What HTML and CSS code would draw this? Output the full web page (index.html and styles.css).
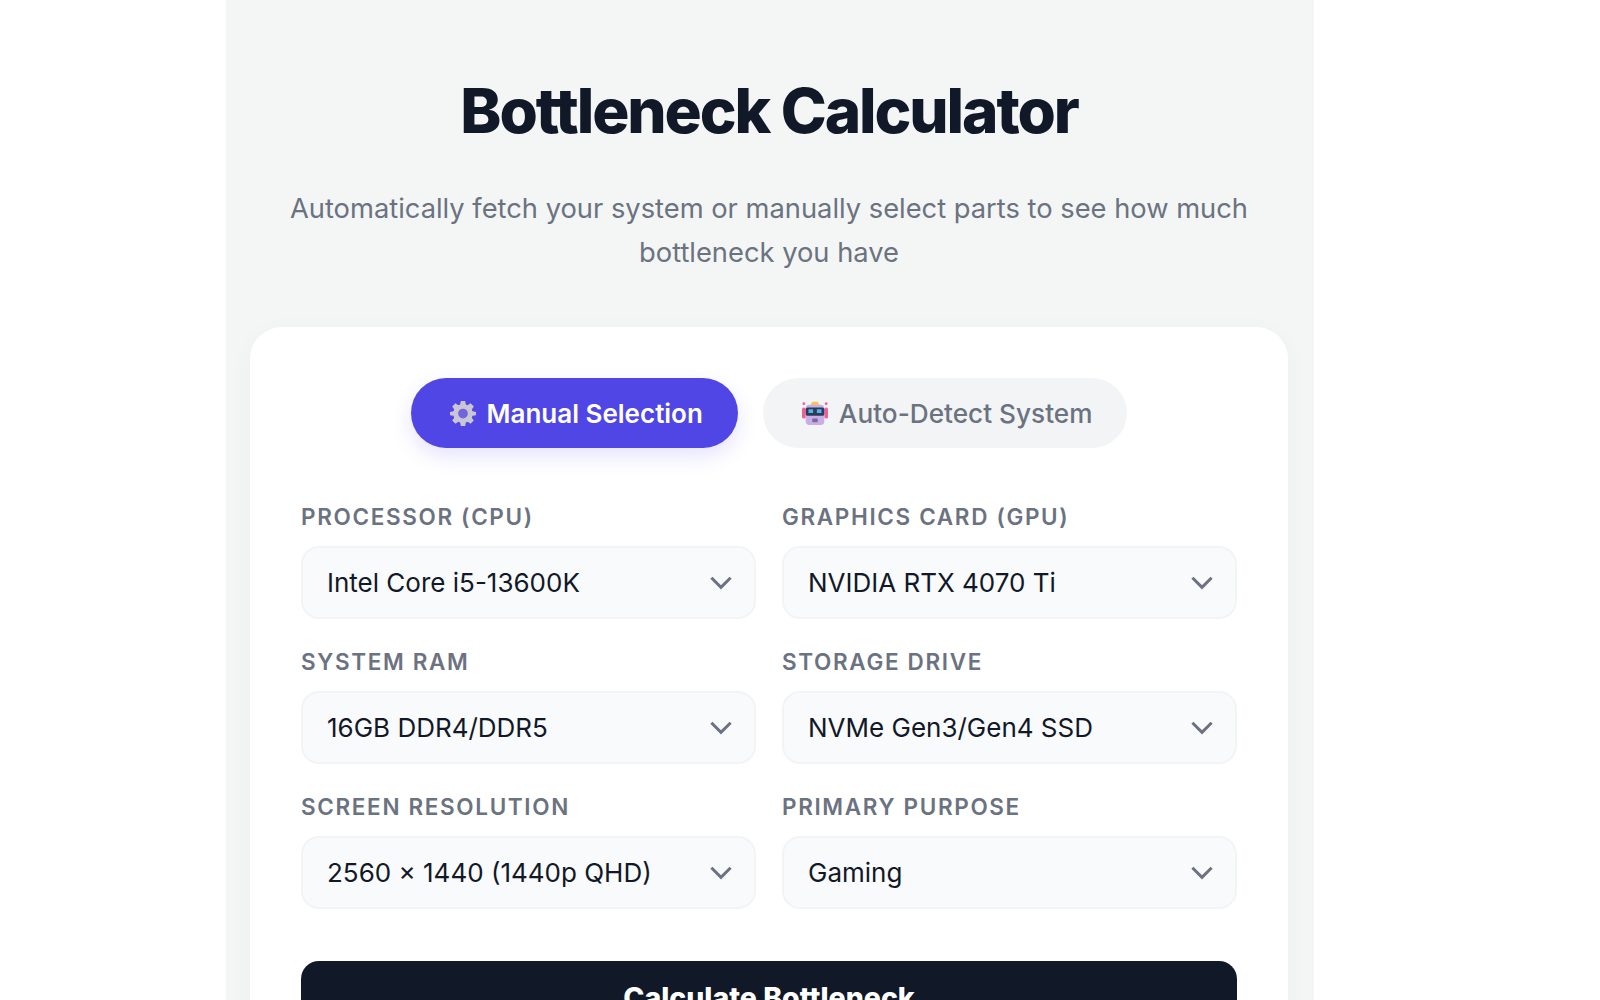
FILE: index.html
```html
<!DOCTYPE html>
<html lang="en">

<head>
    <meta charset="UTF-8">
    <meta name="viewport" content="width=device-width, initial-scale=1.0">
    <title>Bottleneck Calculator</title>
    <link rel="stylesheet" href="styles.css">
</head>

<body>
    <main class="panel">
        <h1>Bottleneck Calculator</h1>
        <p class="subtitle">Automatically fetch your system or manually select parts to see how much bottleneck you have</p>

        <section class="card">
            <div class="tabs">
                <button class="tab tab_active">
                    <svg class="tab_icon" viewBox="0 0 24 24">
                        <path fill="#c9c6d6" d="M10 1h4l.6 3.200 1.700.7L19 3l3 3-1.900 2.700.7 1.700L24 11v3l-3.200.6-.7 1.700L22 19l-3 3-2.700-1.900-1.700.7L14 24h-4l-.6-3.200-1.700-.7L5 22l-3-3 1.900-2.700-.7-1.700L0 14v-3l3.200-.6.7-1.700L2 6l3-3 2.700 1.900 1.700-.7z" />
                        <circle cx="12" cy="12.500" r="4.500" fill="#6f66de" />
                    </svg>
                    Manual Selection
                </button>
                <button class="tab">
                    <svg class="tab_icon" viewBox="0 0 28 28">
                        <rect x="0" y="8" width="4" height="12" rx="2" fill="#ef5f97" />
                        <rect x="24" y="8" width="4" height="12" rx="2" fill="#ef5f97" />
                        <circle cx="2" cy="4" r="1.500" fill="#ef5f97" />
                        <circle cx="26" cy="4" r="1.500" fill="#ef5f97" />
                        <path fill="#f5c451" d="M9 6l2-4h6l2 4z" />
                        <rect x="4" y="5" width="20" height="22" rx="4" fill="#c9aee6" />
                        <rect x="4" y="8" width="20" height="9" rx="2" fill="#2e3a57" />
                        <rect x="7" y="10" width="5" height="4" fill="#4fb4ec" />
                        <rect x="16" y="10" width="5" height="4" fill="#4fb4ec" />
                        <rect x="11" y="20" width="6" height="4" rx="1" fill="#7d6a9c" />
                    </svg>
                    Auto-Detect System
                </button>
            </div>

            <div class="fields">
                <div class="field">
                    <label for="cpu">Processor (CPU)</label>
                    <div class="select_wrap">
                        <select id="cpu"><option>Intel Core i5-13600K</option></select>
                        <svg class="chevron" viewBox="0 0 20 12"><path d="M2 2l8 8 8-8" /></svg>
                    </div>
                </div>
                <div class="field">
                    <label for="gpu">Graphics Card (GPU)</label>
                    <div class="select_wrap">
                        <select id="gpu"><option>NVIDIA RTX 4070 Ti</option></select>
                        <svg class="chevron" viewBox="0 0 20 12"><path d="M2 2l8 8 8-8" /></svg>
                    </div>
                </div>
                <div class="field">
                    <label for="ram">System RAM</label>
                    <div class="select_wrap">
                        <select id="ram"><option>16GB DDR4/DDR5</option></select>
                        <svg class="chevron" viewBox="0 0 20 12"><path d="M2 2l8 8 8-8" /></svg>
                    </div>
                </div>
                <div class="field">
                    <label for="storage">Storage Drive</label>
                    <div class="select_wrap">
                        <select id="storage"><option>NVMe Gen3/Gen4 SSD</option></select>
                        <svg class="chevron" viewBox="0 0 20 12"><path d="M2 2l8 8 8-8" /></svg>
                    </div>
                </div>
                <div class="field">
                    <label for="resolution">Screen Resolution</label>
                    <div class="select_wrap">
                        <select id="resolution"><option>2560 × 1440 (1440p QHD)</option></select>
                        <svg class="chevron" viewBox="0 0 20 12"><path d="M2 2l8 8 8-8" /></svg>
                    </div>
                </div>
                <div class="field">
                    <label for="purpose">Primary Purpose</label>
                    <div class="select_wrap">
                        <select id="purpose"><option>Gaming</option></select>
                        <svg class="chevron" viewBox="0 0 20 12"><path d="M2 2l8 8 8-8" /></svg>
                    </div>
                </div>
            </div>

            <button class="btn_calc">Calculate Bottleneck</button>
        </section>
    </main>
</body>

</html>
```

FILE: styles.css
```css
/* Global Styles */
html,
body {
    height: 1000px;
    overflow: hidden;
}

body {
    margin: 0;
    background: #fff;
    color: #111827;
    font-family: 'Inter', sans-serif;
}

.panel {
    width: 1088px;
    margin-left: 226px;
    padding: 0 26px 0 24px;
    box-sizing: border-box;
    background: #f4f6f6;
    text-align: center;
}

h1 {
    margin: 0;
    padding-top: 75px;
    font-size: 62px;
    line-height: 72px;
    font-weight: 800;
    letter-spacing: -2.100px;
}

.subtitle {
    margin: 40px auto 0;
    width: 980px;
    font-size: 27.300px;
    line-height: 44px;
    color: #6b7280;
}

/* Card */
.card {
    margin-top: 52px;
    padding: 51px 51px 60px;
    background: #fff;
    border-radius: 32px;
    box-shadow: 0 4px 24px rgba(0, 0, 0, 0.03);
}

.tabs {
    display: flex;
    justify-content: center;
    gap: 25px;
}

.tab {
    display: flex;
    align-items: center;
    gap: 11px;
    height: 70px;
    padding: 0 35px 0 39px;
    border: none;
    border-radius: 35px;
    background: #f3f4f6;
    color: #6b7280;
    font-family: inherit;
    font-size: 26.200px;
    font-weight: 500;
}

.tab_active {
    background: #4f46e5;
    color: #fff;
    font-weight: 600;
    font-size: 26px;
    box-shadow: 0 8px 20px rgba(79, 70, 229, 0.15);
}

.tab_icon {
    width: 26px;
    height: 26px;
}

/* Form fields */
.fields {
    display: grid;
    grid-template-columns: 1fr 1fr;
    gap: 27px 26px;
    margin-top: 53px;
    text-align: left;
}

label {
    display: block;
    margin-bottom: 13px;
    font-size: 22.500px;
    line-height: 32px;
    font-weight: 600;
    letter-spacing: 1.650px;
    color: #6b7280;
    text-transform: uppercase;
}

.select_wrap {
    position: relative;
}

select {
    display: block;
    width: 100%;
    height: 73px;
    padding: 0 24px;
    box-sizing: border-box;
    border: 2px solid #f3f4f6;
    border-radius: 18px;
    background: #f9fafb;
    color: #111827;
    font-family: inherit;
    font-size: 26px;
    font-weight: 400;
    appearance: none;
}

.chevron {
    position: absolute;
    top: 29px;
    right: 23px;
    width: 24px;
    height: 15px;
    fill: none;
    stroke: #6b7280;
    stroke-width: 2.500;
}

.btn_calc {
    display: block;
    width: 100%;
    height: 72px;
    margin-top: 52px;
    border: none;
    border-radius: 18px;
    background: #111827;
    color: #fff;
    font-family: inherit;
    font-size: 28.500px;
    font-weight: 800;
}
```
